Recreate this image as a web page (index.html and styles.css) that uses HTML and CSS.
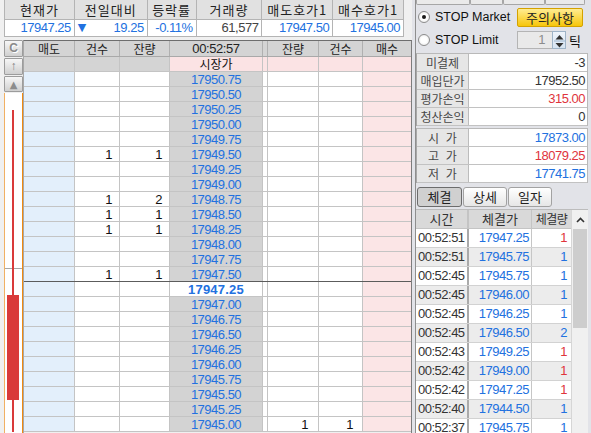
FILE: index.html
```html
<!DOCTYPE html>
<html lang="ko">
<head>
<meta charset="utf-8">
<title>Order Book</title>
<link rel="stylesheet" href="styles.css">
</head>
<body>
<div class="app">
  <div class="left">
    <div class="quote">
      <div class="qrow qh">
        <span>현재가</span><span>전일대비</span><span>등락률</span><span>거래량</span><span>매도호가1</span><span>매수호가1</span>
      </div>
      <div class="qrow qd">
        <span class="blue">17947.25</span><span class="blue chg"><i class="tri">▼</i>19.25</span><span class="blue">-0.11%</span><span class="dk">61,577</span><span class="blue">17947.50</span><span class="blue">17945.00</span>
      </div>
    </div>
    <div class="book">
      <div class="side">
        <div class="sb sbc">C</div>
        <div class="sb sbu">↑</div>
        <div class="sb sbt">▲</div>
        <div class="chart">
          <svg width="17" height="339" viewBox="0 0 17 339">
            <rect x="0" y="175" width="17" height="1" fill="#a6a6a6"/>
            <rect x="7" y="17" width="2" height="322" fill="#d93a3a"/>
            <rect x="2" y="202" width="12" height="105" fill="#d93a3a"/>
          </svg>
        </div>
      </div>
      <div class="ob">
        <div class="r rh"><span>매도</span><span>건수</span><span>잔량</span><span>00:52:57</span><span></span><span>잔량</span><span>건수</span><span>매수</span></div>
        <div class="r rm"><span></span><span></span><span></span><span>시장가</span><span></span><span></span><span></span><span></span></div>
        <div class="r"><span></span><span></span><span></span><span>17950.75</span><span></span><span></span><span></span><span></span></div>
        <div class="r"><span></span><span></span><span></span><span>17950.50</span><span></span><span></span><span></span><span></span></div>
        <div class="r"><span></span><span></span><span></span><span>17950.25</span><span></span><span></span><span></span><span></span></div>
        <div class="r"><span></span><span></span><span></span><span>17950.00</span><span></span><span></span><span></span><span></span></div>
        <div class="r"><span></span><span></span><span></span><span>17949.75</span><span></span><span></span><span></span><span></span></div>
        <div class="r"><span></span><span>1</span><span>1</span><span>17949.50</span><span></span><span></span><span></span><span></span></div>
        <div class="r"><span></span><span></span><span></span><span>17949.25</span><span></span><span></span><span></span><span></span></div>
        <div class="r"><span></span><span></span><span></span><span>17949.00</span><span></span><span></span><span></span><span></span></div>
        <div class="r"><span></span><span>1</span><span>2</span><span>17948.75</span><span></span><span></span><span></span><span></span></div>
        <div class="r"><span></span><span>1</span><span>1</span><span>17948.50</span><span></span><span></span><span></span><span></span></div>
        <div class="r"><span></span><span>1</span><span>1</span><span>17948.25</span><span></span><span></span><span></span><span></span></div>
        <div class="r"><span></span><span></span><span></span><span>17948.00</span><span></span><span></span><span></span><span></span></div>
        <div class="r"><span></span><span></span><span></span><span>17947.75</span><span></span><span></span><span></span><span></span></div>
        <div class="r pre"><span></span><span>1</span><span>1</span><span>17947.50</span><span></span><span></span><span></span><span></span></div>
        <div class="r cur"><span></span><span></span><span></span><span>17947.25</span><span></span><span></span><span></span><span></span></div>
        <div class="r"><span></span><span></span><span></span><span>17947.00</span><span></span><span></span><span></span><span></span></div>
        <div class="r"><span></span><span></span><span></span><span>17946.75</span><span></span><span></span><span></span><span></span></div>
        <div class="r"><span></span><span></span><span></span><span>17946.50</span><span></span><span></span><span></span><span></span></div>
        <div class="r"><span></span><span></span><span></span><span>17946.25</span><span></span><span></span><span></span><span></span></div>
        <div class="r"><span></span><span></span><span></span><span>17946.00</span><span></span><span></span><span></span><span></span></div>
        <div class="r"><span></span><span></span><span></span><span>17945.75</span><span></span><span></span><span></span><span></span></div>
        <div class="r"><span></span><span></span><span></span><span>17945.50</span><span></span><span></span><span></span><span></span></div>
        <div class="r"><span></span><span></span><span></span><span>17945.25</span><span></span><span></span><span></span><span></span></div>
        <div class="r"><span></span><span></span><span></span><span>17945.00</span><span></span><span>1</span><span>1</span><span></span></div>
      </div>
    </div>
  </div>
  <div class="right">
    <div class="rin">
      <div class="topbtns"><span class="tb1"></span><span class="tb2"></span><span class="tb3"></span><span class="tb4"></span></div>
      <div class="srow s1">
        <span class="radio"><span class="rd on"></span>STOP Market</span>
        <span class="warn">주의사항</span>
      </div>
      <div class="srow s2">
        <span class="radio"><span class="rd"></span>STOP Limit</span>
        <span class="spin"><span class="sval">1</span><span class="sbtn"><svg width="13" height="18" viewBox="0 0 13 18"><path d="M2.5 7.5 L6.5 3 L10.5 7.5 Z" fill="#333"/><rect x="1" y="8.5" width="11" height="1" fill="#9bb3cc"/><path d="M2.5 11 L10.5 11 L6.5 15.5 Z" fill="#333"/></svg></span></span>
        <span class="tick">틱</span>
      </div>
      <div class="info">
        <div class="ir"><span class="lb">미결제</span><span class="vl">-3</span></div>
        <div class="ir"><span class="lb">매입단가</span><span class="vl">17952.50</span></div>
        <div class="ir"><span class="lb">평가손익</span><span class="vl red">315.00</span></div>
        <div class="ir"><span class="lb">청산손익</span><span class="vl">0</span></div>
      </div>
      <div class="info info2">
        <div class="ir"><span class="lb">시&nbsp;&nbsp;가</span><span class="vl blue">17873.00</span></div>
        <div class="ir"><span class="lb">고&nbsp;&nbsp;가</span><span class="vl red">18079.25</span></div>
        <div class="ir"><span class="lb">저&nbsp;&nbsp;가</span><span class="vl blue">17741.75</span></div>
      </div>
      <div class="tabs"><span class="tab on">체결</span><span class="tab">상세</span><span class="tab">일자</span></div>
      <div class="trades">
        <div class="tcols">
          <div class="tr th"><span>시간</span><span>체결가</span><span>체결량</span></div>
          <div class="tr"><span>00:52:51</span><span class="blue">17947.25</span><span class="red">1</span></div>
          <div class="tr"><span>00:52:51</span><span class="blue">17945.75</span><span class="blue">1</span></div>
          <div class="tr"><span>00:52:45</span><span class="blue">17945.75</span><span class="blue">1</span></div>
          <div class="tr"><span>00:52:45</span><span class="blue">17946.00</span><span class="blue">1</span></div>
          <div class="tr"><span>00:52:45</span><span class="blue">17946.25</span><span class="blue">1</span></div>
          <div class="tr"><span>00:52:45</span><span class="blue">17946.50</span><span class="blue">2</span></div>
          <div class="tr"><span>00:52:43</span><span class="blue">17949.25</span><span class="red">1</span></div>
          <div class="tr"><span>00:52:42</span><span class="blue">17949.00</span><span class="red">1</span></div>
          <div class="tr"><span>00:52:42</span><span class="blue">17947.25</span><span class="red">1</span></div>
          <div class="tr"><span>00:52:40</span><span class="blue">17944.50</span><span class="blue">1</span></div>
          <div class="tr"><span>00:52:37</span><span class="blue">17945.75</span><span class="blue">1</span></div>
        </div>
        <div class="scroll">
          <div class="sup"><svg width="9" height="6" viewBox="0 0 9 6"><path d="M1 5 L4.5 1.5 L8 5" fill="none" stroke="#333" stroke-width="1.6"/></svg></div>
          <div class="thumb"></div>
        </div>
      </div>
    </div>
  </div>
</div>
</body>
</html>
```

FILE: styles.css
```css
* { box-sizing: border-box; margin: 0; padding: 0; }
html, body { width: 591px; height: 433px; overflow: hidden; }
body {
  background: #f0f0f0;
  font-family: "Liberation Sans", "Noto Sans CJK KR", sans-serif;
  font-size: 13px;
  letter-spacing: -0.5px;
  color: #222;
}
.blue { color: #2271e0; }
.red { color: #e0343c; }
.dk { color: #444; }

.app { display: flex; height: 433px; }

/* ---------- left part ---------- */
.left { width: 412px; flex: none; padding-left: 4px; display: flex; flex-direction: column; gap: 3px; }

.quote { width: 400px; border-left: 1px solid #b4b4b4; }
.qrow { display: flex; }
.qrow > span {
  border-right: 1px solid #b4b4b4;
  border-bottom: 1px solid #b4b4b4;
  white-space: nowrap;
}
.qrow > span:nth-child(1) { width: 70px; }
.qrow > span:nth-child(2) { width: 73px; }
.qrow > span:nth-child(3) { width: 49px; }
.qrow > span:nth-child(4) { width: 66px; }
.qrow > span:nth-child(5) { width: 71px; }
.qrow > span:nth-child(6) { width: 71px; }
.qh > span {
  height: 20px; line-height: 19px; background: #e1e1e1; text-align: center;
  font-family: "Noto Sans CJK KR", sans-serif; font-size: 13px; color: #222; letter-spacing: 1px;
}
.qd > span {
  height: 17px; line-height: 16px; background: #fff; text-align: right; padding-right: 3px;
}
.qd .chg { display: flex; justify-content: space-between; padding-left: 3px; }
.tri { font-style: normal; font-size: 11px; color: #2271e0; font-family: "DejaVu Sans", sans-serif; }

.book { display: flex; flex: 1; min-height: 0; }
.side { width: 19px; flex: none; display: flex; flex-direction: column; gap: 1px; }
.sb {
  height: 17px; border: 1px solid #9c9c9c; border-radius: 1px;
  background: linear-gradient(#f6f6f6, #d0d0d0);
  text-align: center; line-height: 15px; color: #7a7a7a; letter-spacing: 0;
}
.sbc { font-weight: bold; font-size: 12px; color: #8a8a8a; text-shadow: 1px 1px 0 #fff; }
.sbu { font-size: 12px; color: #808080; }
.sbt { height: 16px; font-size: 10px; color: #8c8c8c; font-family: "DejaVu Sans", sans-serif; }
.chart {
  flex: 1; background: #fff;
  border-left: 1px solid #f1b062; border-right: 1px solid #f08a10;
  overflow: hidden;
}
.chart svg { display: block; }

.ob {
  width: 389px; flex: none; display: flex; flex-direction: column; overflow: hidden;
  border-top: 1px solid #6e6e6e; border-left: 1px solid #a8a8a8; border-right: 1px solid #7c7c7c;
}
.r { display: flex; height: 15px; flex: none; border-bottom: 1px solid #c4c4c4; }
.r > span {
  border-right: 1px solid #c4c4c4; line-height: 15px; height: 14px; white-space: nowrap;
  text-align: right; padding-right: 7px; color: #111; background: #fff;
}
.r > span:nth-child(1) { width: 51px; background: #e3effb; }
.r > span:nth-child(2) { width: 45px; }
.r > span:nth-child(3) { width: 50px; }
.r > span:nth-child(4) { width: 93px; background: #d3d3d3; color: #2271e0; text-align: center; padding: 0; }
.r > span:nth-child(5) { width: 5px; padding: 0; }
.r > span:nth-child(6) { width: 51px; padding-right: 10px; }
.r > span:nth-child(7) { width: 44px; padding-right: 9px; }
.r > span:nth-child(8) { width: 48px; border-right: 0; background: #fbe5e6; }

.rh { height: 16px; border-bottom-color: #a9a9a9; }
.r.rh > span:nth-child(n) {
  height: 15px; line-height: 15px; background: #d4d4d4; color: #222; text-align: center; padding: 0;
  border-right-color: #b0b0b0;
  font-family: "Noto Sans CJK KR", sans-serif; font-size: 12px; letter-spacing: 0;
}
.r.rh > span:nth-child(4) { font-family: "Liberation Sans", sans-serif; font-size: 13px; letter-spacing: -0.4px; }
.r.rm > span:nth-child(-n+3) { background: #d4d4d4; }
.r.rm > span:nth-child(n+4) { background: #fbe3e4; }
.r.rm > span:nth-child(4) { color: #111; font-family: "Noto Sans CJK KR", sans-serif; font-size: 12px; letter-spacing: 0; line-height: 14px; }
.r.pre { border-bottom-color: #5c5c5c; }
.r.cur > span:nth-child(4) {
  background: #fff; font-weight: bold; font-size: 13px; letter-spacing: 0.2px;
}

/* ---------- right panel ---------- */
.right { flex: 1; background: #e2e3e8; padding-left: 3px; display: flex; }
.rin { flex: 1; border-left: 1px solid #8e8e8e; display: flex; flex-direction: column; }

.topbtns { height: 5px; display: flex; }
.topbtns span { height: 5px; border: 1px solid #a6a6a6; border-top: 0; border-radius: 0 0 2px 2px; background: #eaeaea; }
.tb1 { width: 54px; } .tb2 { width: 33px; } .tb3 { width: 42px; } .tb4 { width: 40px; }

.srow { display: flex; align-items: center; padding-left: 2px; }
.s1 { height: 22px; margin-top: 1px; }
.s2 { height: 24px; }
.radio { display: flex; align-items: center; gap: 5px; width: 99px; font-size: 12.5px; color: #111; letter-spacing: 0; white-space: nowrap; }
.rd {
  width: 12px; height: 12px; border-radius: 50%; border: 1px solid #8c8c8c; flex: none;
  background: radial-gradient(circle at 50% 50%, #ffffff 40%, #e2e2e2);
  display: flex; align-items: center; justify-content: center;
}
.rd.on::after { content: ""; width: 4px; height: 4px; border-radius: 50%; background: #1a1a1a; }
.warn {
  width: 66px; height: 19px; line-height: 17px; text-align: center;
  border: 1px solid #d4a200; border-radius: 2px;
  background: linear-gradient(#ffec92, #f7c60a);
  font-family: "Noto Sans CJK KR", sans-serif; font-size: 13px; color: #222; letter-spacing: 0;
}
.spin { display: flex; height: 18px; }
.sval {
  width: 35px; height: 18px; border: 1px solid #b4b4b4; border-right: 0; background: #e9e9e9;
  text-align: right; padding-right: 7px; line-height: 16px; color: #8c8c8c;
}
.sbtn { width: 14px; height: 18px; border: 1px solid #9fb4c8; background: linear-gradient(#eef4fb, #d6e4f2); display: block; }
.sbtn svg { display: block; }
.tick { margin-left: 3px; font-family: "Noto Sans CJK KR", sans-serif; font-size: 13px; color: #111; }

.info { width: 172px; margin-top: 1px; border-top: 1px solid #b9b9b9; border-left: 1px solid #a8a8a8; border-right: 1px solid #b9b9b9; }
.info2 { margin-top: 2px; }
.ir { display: flex; height: 18px; border-bottom: 1px solid #c2c2c2; }
.lb {
  width: 52px; background: #e6e6e6; border-right: 1px solid #bcbcbc; text-align: center;
  line-height: 17px; font-family: "Noto Sans CJK KR", sans-serif; font-size: 12px; color: #484848; letter-spacing: 0;
}
.vl { flex: 1; background: #fff; text-align: right; padding-right: 2px; line-height: 17px; color: #333; }
.vl.blue { color: #2271e0; } .vl.red { color: #e0343c; }

.tabs { height: 26px; display: flex; align-items: center; gap: 1px; padding-left: 1px; padding-top: 2px; }
.tab {
  width: 44px; height: 20px; line-height: 18px; text-align: center;
  border: 1px solid #a2a2a2; border-radius: 3px;
  background: linear-gradient(#ffffff, #e6e6e6);
  font-family: "Noto Sans CJK KR", sans-serif; font-size: 13px; color: #222; letter-spacing: 0;
}
.tab.on { width: 45px; background: #d0d0d0; border-color: #6c6c6c; }

.trades { flex: 1; display: flex; width: 172px; overflow: hidden; border-top: 1px solid #bcbcbc; }
.tcols { width: 155px; display: flex; flex-direction: column; }
.tr { display: flex; height: 19px; flex: none; border-bottom: 1px solid #d2d2d2; background: #fff; }
.tr:nth-child(odd) { background: #ececec; }
.tr > span { line-height: 18px; white-space: nowrap; overflow: hidden; }
.tr > span:nth-child(1) { width: 53px; border-right: 2px solid #aaaaaa; padding-left: 2px; color: #333; }
.tr > span:nth-child(2) { width: 63px; border-right: 1px solid #c6c6c6; text-align: right; padding-right: 2px; }
.tr > span:nth-child(3) { width: 39px; text-align: right; padding-right: 4px; }
.tr.th { background: #d9d9d9; border-bottom-color: #c4c4c4; }
.tr.th > span {
  text-align: center; padding: 0; color: #333; overflow: visible;
  font-family: "Noto Sans CJK KR", sans-serif; font-size: 13px; border-right-color: #c4c4c4; letter-spacing: 0;
}
.tr.th > span:nth-child(3) { font-size: 12px; letter-spacing: -0.5px; }
.scroll { width: 17px; background: #f0f0f0; border-left: 1px solid #d6d6d6; display: flex; flex-direction: column; }
.sup { height: 19px; display: flex; align-items: center; justify-content: center; }
.thumb { height: 99px; margin: 0 1px; background: #cdcdcd; }
```
